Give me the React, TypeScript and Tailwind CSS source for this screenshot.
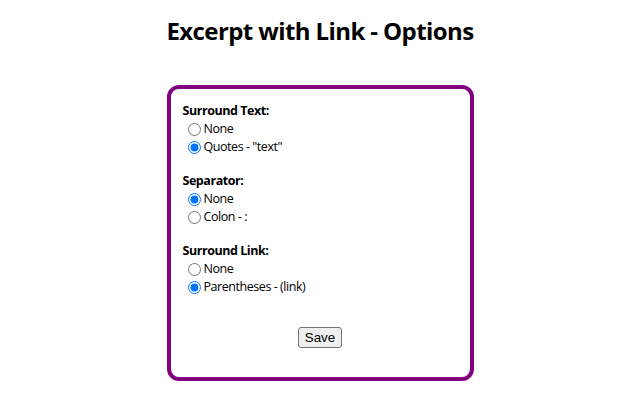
const groups = [
  { title: "Surround Text:", name: "text", options: ["None", 'Quotes - "text"'], checked: 1 },
  { title: "Separator:", name: "sep", options: ["None", "Colon - :"], checked: 0 },
  { title: "Surround Link:", name: "link", options: ["None", "Parentheses - (link)"], checked: 1 },
];

export default function App() {
  return (
    <div className="min-h-[400px] bg-white text-black font-['Segoe_UI','Open_Sans',sans-serif]">
      <h1 className="pt-[14px] text-center text-[24px] font-bold leading-[34px] tracking-[-0.6px]">
        Excerpt with Link - Options
      </h1>
      <div className="mx-auto mt-[37px] w-[307px] rounded-[12px] border-4 border-[#800080] px-3 pt-[13px] pb-[29px]">
        <div className="flex flex-col gap-4">
          {groups.map((g) => (
            <div key={g.name} className="flex flex-col text-[12.5px] leading-[18px] tracking-[-0.45px]">
              <span className="font-bold">{g.title}</span>
              {g.options.map((o, i) => (
                <label key={o} className="flex items-center">
                  <input
                    type="radio"
                    name={g.name}
                    defaultChecked={i === g.checked}
                    className="ml-[5px] mr-[3px] h-[13px] w-[13px]"
                  />
                  {o}
                </label>
              ))}
            </div>
          ))}
        </div>
        <div className="mt-[31px] flex justify-center">
          <button className="rounded-[3px] border border-[#767676] bg-[#efefef] px-[6px] py-[1px] font-['Liberation_Sans',Arial,sans-serif] text-[13.33px] leading-[17px]">
            Save
          </button>
        </div>
      </div>
    </div>
  );
}
